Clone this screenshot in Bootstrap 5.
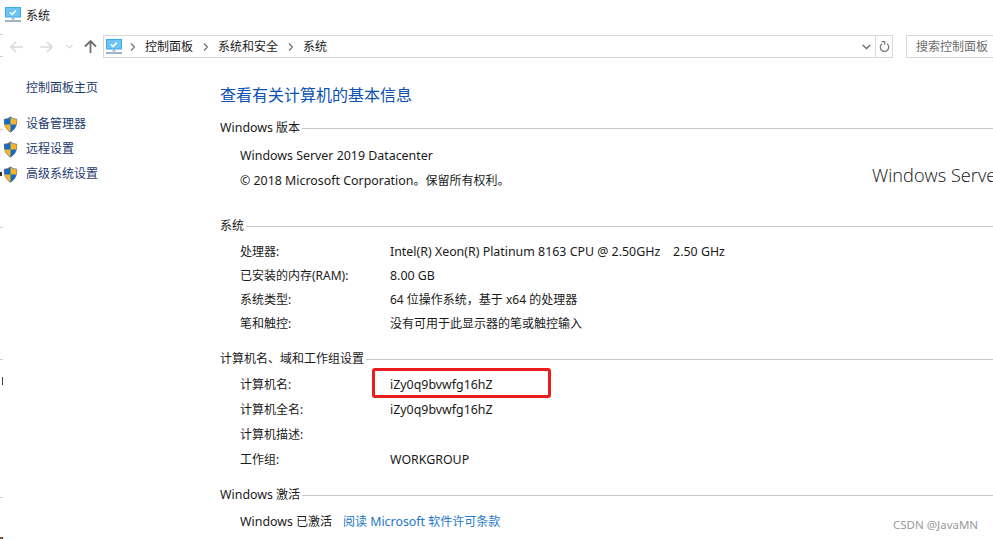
<!DOCTYPE html>
<html lang="zh-CN">
<head>
    <meta charset="UTF-8">
    <meta name="viewport" content="width=device-width, initial-scale=1">
    <title>系统</title>
    <link href="https://cdn.jsdelivr.net/npm/bootstrap@5.3.0/dist/css/bootstrap.min.css" rel="stylesheet">
    <style>
        html, body { height: 539px; overflow: hidden; }
        body { background: #fff; color: #1a1a1a; font-family: "Noto Sans", "Noto Sans CJK SC", sans-serif; font-size: 12px; line-height: 16px; }
        .lat { font-size: 12.4px; }
        .title-row { height: 30px; padding: 7px 0 0 5px; gap: 5px; }
        .title-row span { margin-top: 1px; }
        .nav-row { height: 23px; margin-top: 5px; padding-left: 6px; }
        .nav-btn { width: 20px; display: flex; justify-content: center; }
        .nav-fwd { margin-left: 10px; }
        .nav-more { width: 14px; margin-left: 6px; }
        .nav-up { margin-left: 4px; }
        .addr-box { width: 790px; height: 23px; margin-left: 3px; border: 1px solid #d9d9d9; }
        .addr-path { gap: 10px; padding-left: 2px; }
        .addr-icon { margin-right: -2px; }
        .addr-refresh { width: 17px; height: 21px; border-left: 1px solid #d9d9d9; }
        .search-box { flex: 1; height: 23px; margin-left: 13px; padding-left: 9px; border: 1px solid #d9d9d9; border-right: 0; color: #6d6d6d; white-space: nowrap; line-height: 21px; }
        .page-body { padding-top: 22px; }
        .side-col { width: 220px; flex: none; color: #1c3a6e; }
        .side-home { margin: 0 0 0 26px; height: 16px; }
        .side-item { height: 25px; padding-left: 3px; gap: 8px; }
        .side-list { margin-top: 20px; }
        .main-col { flex: 1; min-width: 0; position: relative; }
        .page-title { margin: 0 0 14px; font-size: 16px; line-height: 22px; font-weight: 400; color: #0b52b3; padding-top: 4px; }
        .group-head { height: 16px; gap: 2px; }
        .group-head hr { flex: 1; margin: 0; border: 0; border-top: 1px solid #c8c8c8; opacity: 1; }
        .group-body { padding-left: 20px; }
        .gap-ver { padding-top: 7px; }
        .gap-sys { padding-top: 6px; }
        .gap-name { padding-top: 5px; }
        .gap-act { padding-top: 6px; }
        .head-sys { margin-top: 25px; }
        .head-next { margin-top: 15px; }
        .info-row { display: flex; align-items: center; height: 25px; }
        .row-sys { height: 24px; }
        .info-key { width: 150px; flex: none; }
        .product-big { position: absolute; left: 652px; top: 82px; font-family: "Open Sans", sans-serif; font-size: 18.2px; line-height: 26px; font-weight: 300; white-space: nowrap; color: #111; }
        .red-mark { position: absolute; left: -18px; top: -9px; width: 179px; height: 30px; border: 3px solid #ea1c1c; border-radius: 3px; }
        .link-blue { color: #2378c8; text-decoration: none; margin-left: 11px; }
        .csdn-mark { position: absolute; left: 893px; top: 517px; color: #999; font-size: 11.5px; }
        .edge-bits { position: absolute; left: 0; top: 0; }
    </style>
</head>
<body>
    <div class="title-row d-flex align-items-start">
        <svg width="16" height="16" viewBox="0 0 16 16"><rect x="0" y="0" width="16" height="10.5" fill="#3fa9ee"/><rect x="1" y="1" width="14" height="8.5" fill="#6cc4f5"/><path d="M5 5.5l2 2 4-4" fill="none" stroke="#fff" stroke-width="1.6"/><rect x="6.5" y="10.5" width="3" height="2" fill="#9eb4c6"/><rect x="0" y="13" width="16" height="2" fill="#9eb4c6"/></svg>
        <span>系统</span>
    </div>

    <div class="nav-row d-flex align-items-center">
        <div class="nav-btn"><svg width="13" height="12" viewBox="0 0 13 12"><path d="M6 1L1 6l5 5M1 6h12" fill="none" stroke="#d9d9d9" stroke-width="1.6"/></svg></div>
        <div class="nav-btn nav-fwd"><svg width="13" height="12" viewBox="0 0 13 12"><path d="M7 1l5 5-5 5M12 6H0" fill="none" stroke="#d9d9d9" stroke-width="1.6"/></svg></div>
        <div class="nav-btn nav-more"><svg width="7" height="5" viewBox="0 0 7 5"><path d="M.5 1l3 3 3-3" fill="none" stroke="#d9d9d9" stroke-width="1.2"/></svg></div>
        <div class="nav-btn nav-up"><svg width="13" height="13" viewBox="0 0 13 13"><path d="M1 6.5l5.5-5.5 5.500 5.500M6.500 1.500V13" fill="none" stroke="#6e6e6e" stroke-width="1.8"/></svg></div>
        <div class="addr-box d-flex align-items-center">
            <div class="addr-path d-flex align-items-center flex-grow-1">
                <svg class="addr-icon" width="16" height="16" viewBox="0 0 16 16"><rect x="0" y="0" width="16" height="10.5" fill="#3fa9ee"/><rect x="1" y="1" width="14" height="8.5" fill="#6cc4f5"/><path d="M5 5.5l2 2 4-4" fill="none" stroke="#fff" stroke-width="1.6"/><rect x="6.5" y="10.5" width="3" height="2" fill="#9eb4c6"/><rect x="0" y="13" width="16" height="2" fill="#9eb4c6"/></svg>
                <svg width="5" height="8" viewBox="0 0 5 8"><path d="M1 .5L4.500 4 1 7.500" fill="none" stroke="#6e6e6e" stroke-width="1.2"/></svg>
                <span>控制面板</span>
                <svg width="5" height="8" viewBox="0 0 5 8"><path d="M1 .5L4.500 4 1 7.500" fill="none" stroke="#6e6e6e" stroke-width="1.2"/></svg>
                <span>系统和安全</span>
                <svg width="5" height="8" viewBox="0 0 5 8"><path d="M1 .5L4.500 4 1 7.500" fill="none" stroke="#6e6e6e" stroke-width="1.2"/></svg>
                <span>系统</span>
            </div>
            <svg class="me-1" width="9" height="6" viewBox="0 0 9 6"><path d="M.7 1l3.800 3.600L8.300 1" fill="none" stroke="#6e6e6e" stroke-width="1.4"/></svg>
            <div class="addr-refresh d-flex align-items-center justify-content-center">
                <svg width="11" height="12" viewBox="0 0 11 12"><path d="M3 2.800a4.200 4.200 0 1 0 5 0M2.500 .6h3.200v3" fill="none" stroke="#7a7a7a" stroke-width="1.3"/></svg>
            </div>
        </div>
        <div class="search-box">搜索控制面板</div>
    </div>

    <div class="page-body d-flex">
        <div class="side-col">
            <p class="side-home">控制面板主页</p>
            <div class="side-list">
                <div class="side-item d-flex align-items-start">
                    <svg width="15" height="17" viewBox="0 0 17 18"><path d="M8.500.5C6.500 2.200 4 3 1.500 3c0 6 .8 11 7 14.500C14.700 14 15.500 9 15.500 3 13 3 10.500 2.200 8.500.5z" fill="#0f6fc6" stroke="#55606b"/><path d="M8.500 1v8H2c.3 3 1.700 5.600 6.500 8V9H15c.3-2 .5-4 .5-6-2.500 0-5-.8-7-2z" fill="#f7b52b"/></svg>
                    <span>设备管理器</span>
                </div>
                <div class="side-item d-flex align-items-start">
                    <svg width="15" height="17" viewBox="0 0 17 18"><path d="M8.500.5C6.500 2.200 4 3 1.500 3c0 6 .8 11 7 14.500C14.700 14 15.500 9 15.500 3 13 3 10.500 2.200 8.500.5z" fill="#0f6fc6" stroke="#55606b"/><path d="M8.500 1v8H2c.3 3 1.700 5.600 6.500 8V9H15c.3-2 .5-4 .5-6-2.500 0-5-.8-7-2z" fill="#f7b52b"/></svg>
                    <span>远程设置</span>
                </div>
                <div class="side-item d-flex align-items-start">
                    <svg width="15" height="17" viewBox="0 0 17 18"><path d="M8.500.5C6.500 2.200 4 3 1.500 3c0 6 .8 11 7 14.500C14.700 14 15.500 9 15.500 3 13 3 10.500 2.200 8.500.5z" fill="#0f6fc6" stroke="#55606b"/><path d="M8.500 1v8H2c.3 3 1.700 5.600 6.500 8V9H15c.3-2 .5-4 .5-6-2.500 0-5-.8-7-2z" fill="#f7b52b"/></svg>
                    <span>高级系统设置</span>
                </div>
            </div>
        </div>

        <div class="main-col">
            <h1 class="page-title">查看有关计算机的基本信息</h1>

            <div class="group-head d-flex align-items-center"><span><span class="lat">Windows</span> 版本</span><hr></div>
            <div class="group-body gap-ver">
                <div class="info-row"><span class="lat">Windows Server 2019 Datacenter</span></div>
                <div class="info-row"><span><span class="lat">© 2018 Microsoft Corporation</span>。保留所有权利。</span></div>
            </div>
            <div class="product-big">Windows Server</div>

            <div class="group-head head-sys d-flex align-items-center"><span>系统</span><hr></div>
            <div class="group-body gap-sys">
                <div class="info-row row-sys"><span class="info-key">处理器:</span><span class="lat">Intel(R) Xeon(R) Platinum 8163 CPU @ 2.50GHz&nbsp;&nbsp;&nbsp; 2.50 GHz</span></div>
                <div class="info-row row-sys"><span class="info-key">已安装的内存(RAM):</span><span class="lat">8.00 GB</span></div>
                <div class="info-row row-sys"><span class="info-key">系统类型:</span><span>64 位操作系统，基于 x64 的处理器</span></div>
                <div class="info-row row-sys"><span class="info-key">笔和触控:</span><span>没有可用于此显示器的笔或触控输入</span></div>
            </div>

            <div class="group-head head-next d-flex align-items-center"><span>计算机名、域和工作组设置</span><hr></div>
            <div class="group-body gap-name">
                <div class="info-row"><span class="info-key">计算机名:</span><span class="position-relative lat">iZy0q9bvwfg16hZ<span class="red-mark"></span></span></div>
                <div class="info-row"><span class="info-key">计算机全名:</span><span class="lat">iZy0q9bvwfg16hZ</span></div>
                <div class="info-row"><span class="info-key">计算机描述:</span></div>
                <div class="info-row"><span class="info-key">工作组:</span><span class="lat">WORKGROUP</span></div>
            </div>

            <div class="group-head head-next d-flex align-items-center"><span><span class="lat">Windows</span> 激活</span><hr></div>
            <div class="group-body gap-act">
                <div class="info-row"><span><span class="lat">Windows</span> 已激活</span><a class="link-blue" href="#">阅读 <span class="lat">Microsoft</span> 软件许可条款</a></div>
            </div>
        </div>
    </div>
    <div class="csdn-mark">CSDN @JavaMN</div>

    <svg class="edge-bits" width="4" height="539" viewBox="0 0 4 539">
        <g fill="#cfcfcf"><rect y="34" width="3" height="1"/><rect y="56" width="3" height="1"/><rect y="129" width="3" height="1"/><rect y="227" width="3" height="1"/><rect y="359" width="3" height="1"/><rect y="497" width="3" height="1"/></g>
        <rect x="2" y="377" width="1" height="8" fill="#444"/>
        <rect x="0" y="172" width="2" height="4" fill="#333"/>
        <rect x="0" y="537" width="1" height="2" fill="#d22"/><rect x="1" y="537" width="1" height="2" fill="#2a2"/><rect x="2" y="537" width="1" height="2" fill="#22d"/>
    </svg>

    <script src="https://cdn.jsdelivr.net/npm/bootstrap@5.3.0/dist/js/bootstrap.bundle.min.js"></script>
</body>
</html>
